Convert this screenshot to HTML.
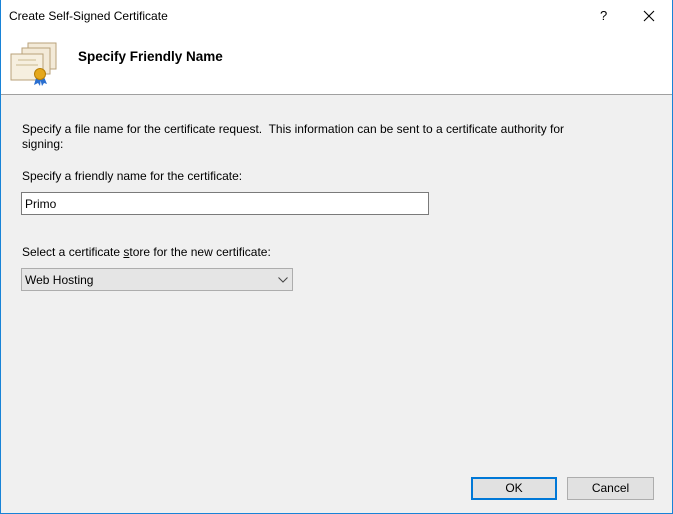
<!DOCTYPE html>
<html><head><style>
body{margin:0;width:673px;height:514px;overflow:hidden;font-family:"Liberation Sans",sans-serif;font-size:12px;color:#000}
.win{position:absolute;left:0;top:0;width:671px;height:513px;border:1px solid #1883d7;border-top:none;background:#f0f0f0}
.hdr{position:absolute;left:0;top:0;width:671px;height:94px;background:#fff;border-bottom:1px solid #a0a0a0}
.t{position:absolute;white-space:nowrap}
.box{position:absolute;background:#fff;border:1px solid #7a7a7a;box-sizing:border-box}
.btn{position:absolute;box-sizing:border-box;background:#e1e1e1;border:1px solid #adadad;text-align:center;line-height:20px}
</style></head><body>
<div class="win">
<div class="hdr">
 <div class="t" style="left:8px;top:9px">Create Self-Signed Certificate</div>
 <div class="t" style="left:599px;top:8px;font-size:13px">?</div>
 <svg style="position:absolute;left:642px;top:10px" width="12" height="12"><path d="M1 1L11 11M11 1L1 11" stroke="#000" stroke-width="1.1"/></svg>
 <svg style="position:absolute;left:7px;top:40px" width="50" height="46">
  <rect x="20" y="3" width="28" height="26" fill="#f3ead8" stroke="#b8a27a"/>
  <rect x="14" y="8" width="28" height="26" fill="#f3ead8" stroke="#b8a27a"/>
  <rect x="3" y="14" width="32" height="26" fill="#f6efdf" stroke="#b8a27a"/>
  <line x1="10" y1="20" x2="28" y2="20" stroke="#c9b88f"/>
  <line x1="8" y1="25" x2="30" y2="25" stroke="#c9b88f"/>
  <path d="M28 38l-2 7 4-2 2 3 1-8zM32 38l2 8 2-3 3 1-3-7z" fill="#2a6fd0"/>
  <circle cx="32" cy="34" r="5.5" fill="#e5a81c" stroke="#b57d06"/>
 </svg>
 <div class="t" style="left:77px;top:49px;font-weight:bold;font-size:13.5px">Specify Friendly Name</div>
</div>
<div class="t" style="left:21px;top:122px">Specify a file name for the certificate request.&nbsp; This information can be sent to a certificate authority for</div>
<div class="t" style="left:21px;top:137px">signing:</div>
<div class="t" style="left:21px;top:169px">Specify a friendly name for the certificate:</div>
<div class="box" style="left:20px;top:192px;width:408px;height:23px"><span class="t" style="left:3px;top:4px">Primo</span></div>
<div class="t" style="left:21px;top:245px">Select a certificate <u>s</u>tore for the new certificate:</div>
<div class="box" style="left:20px;top:268px;width:272px;height:23px;background:#e5e5e5;border-color:#adadad"><span class="t" style="left:3px;top:4px">Web Hosting</span>
 <svg style="position:absolute;left:256px;top:8px" width="10" height="6"><path d="M0.5 0.5L5 5L9.5 0.5" stroke="#444" fill="none"/></svg></div>
<div class="btn" style="left:470px;top:477px;width:86px;height:23px;border:2px solid #0078d7;line-height:19px">OK</div>
<div class="btn" style="left:566px;top:477px;width:87px;height:23px">Cancel</div>
</div>
</body></html>
